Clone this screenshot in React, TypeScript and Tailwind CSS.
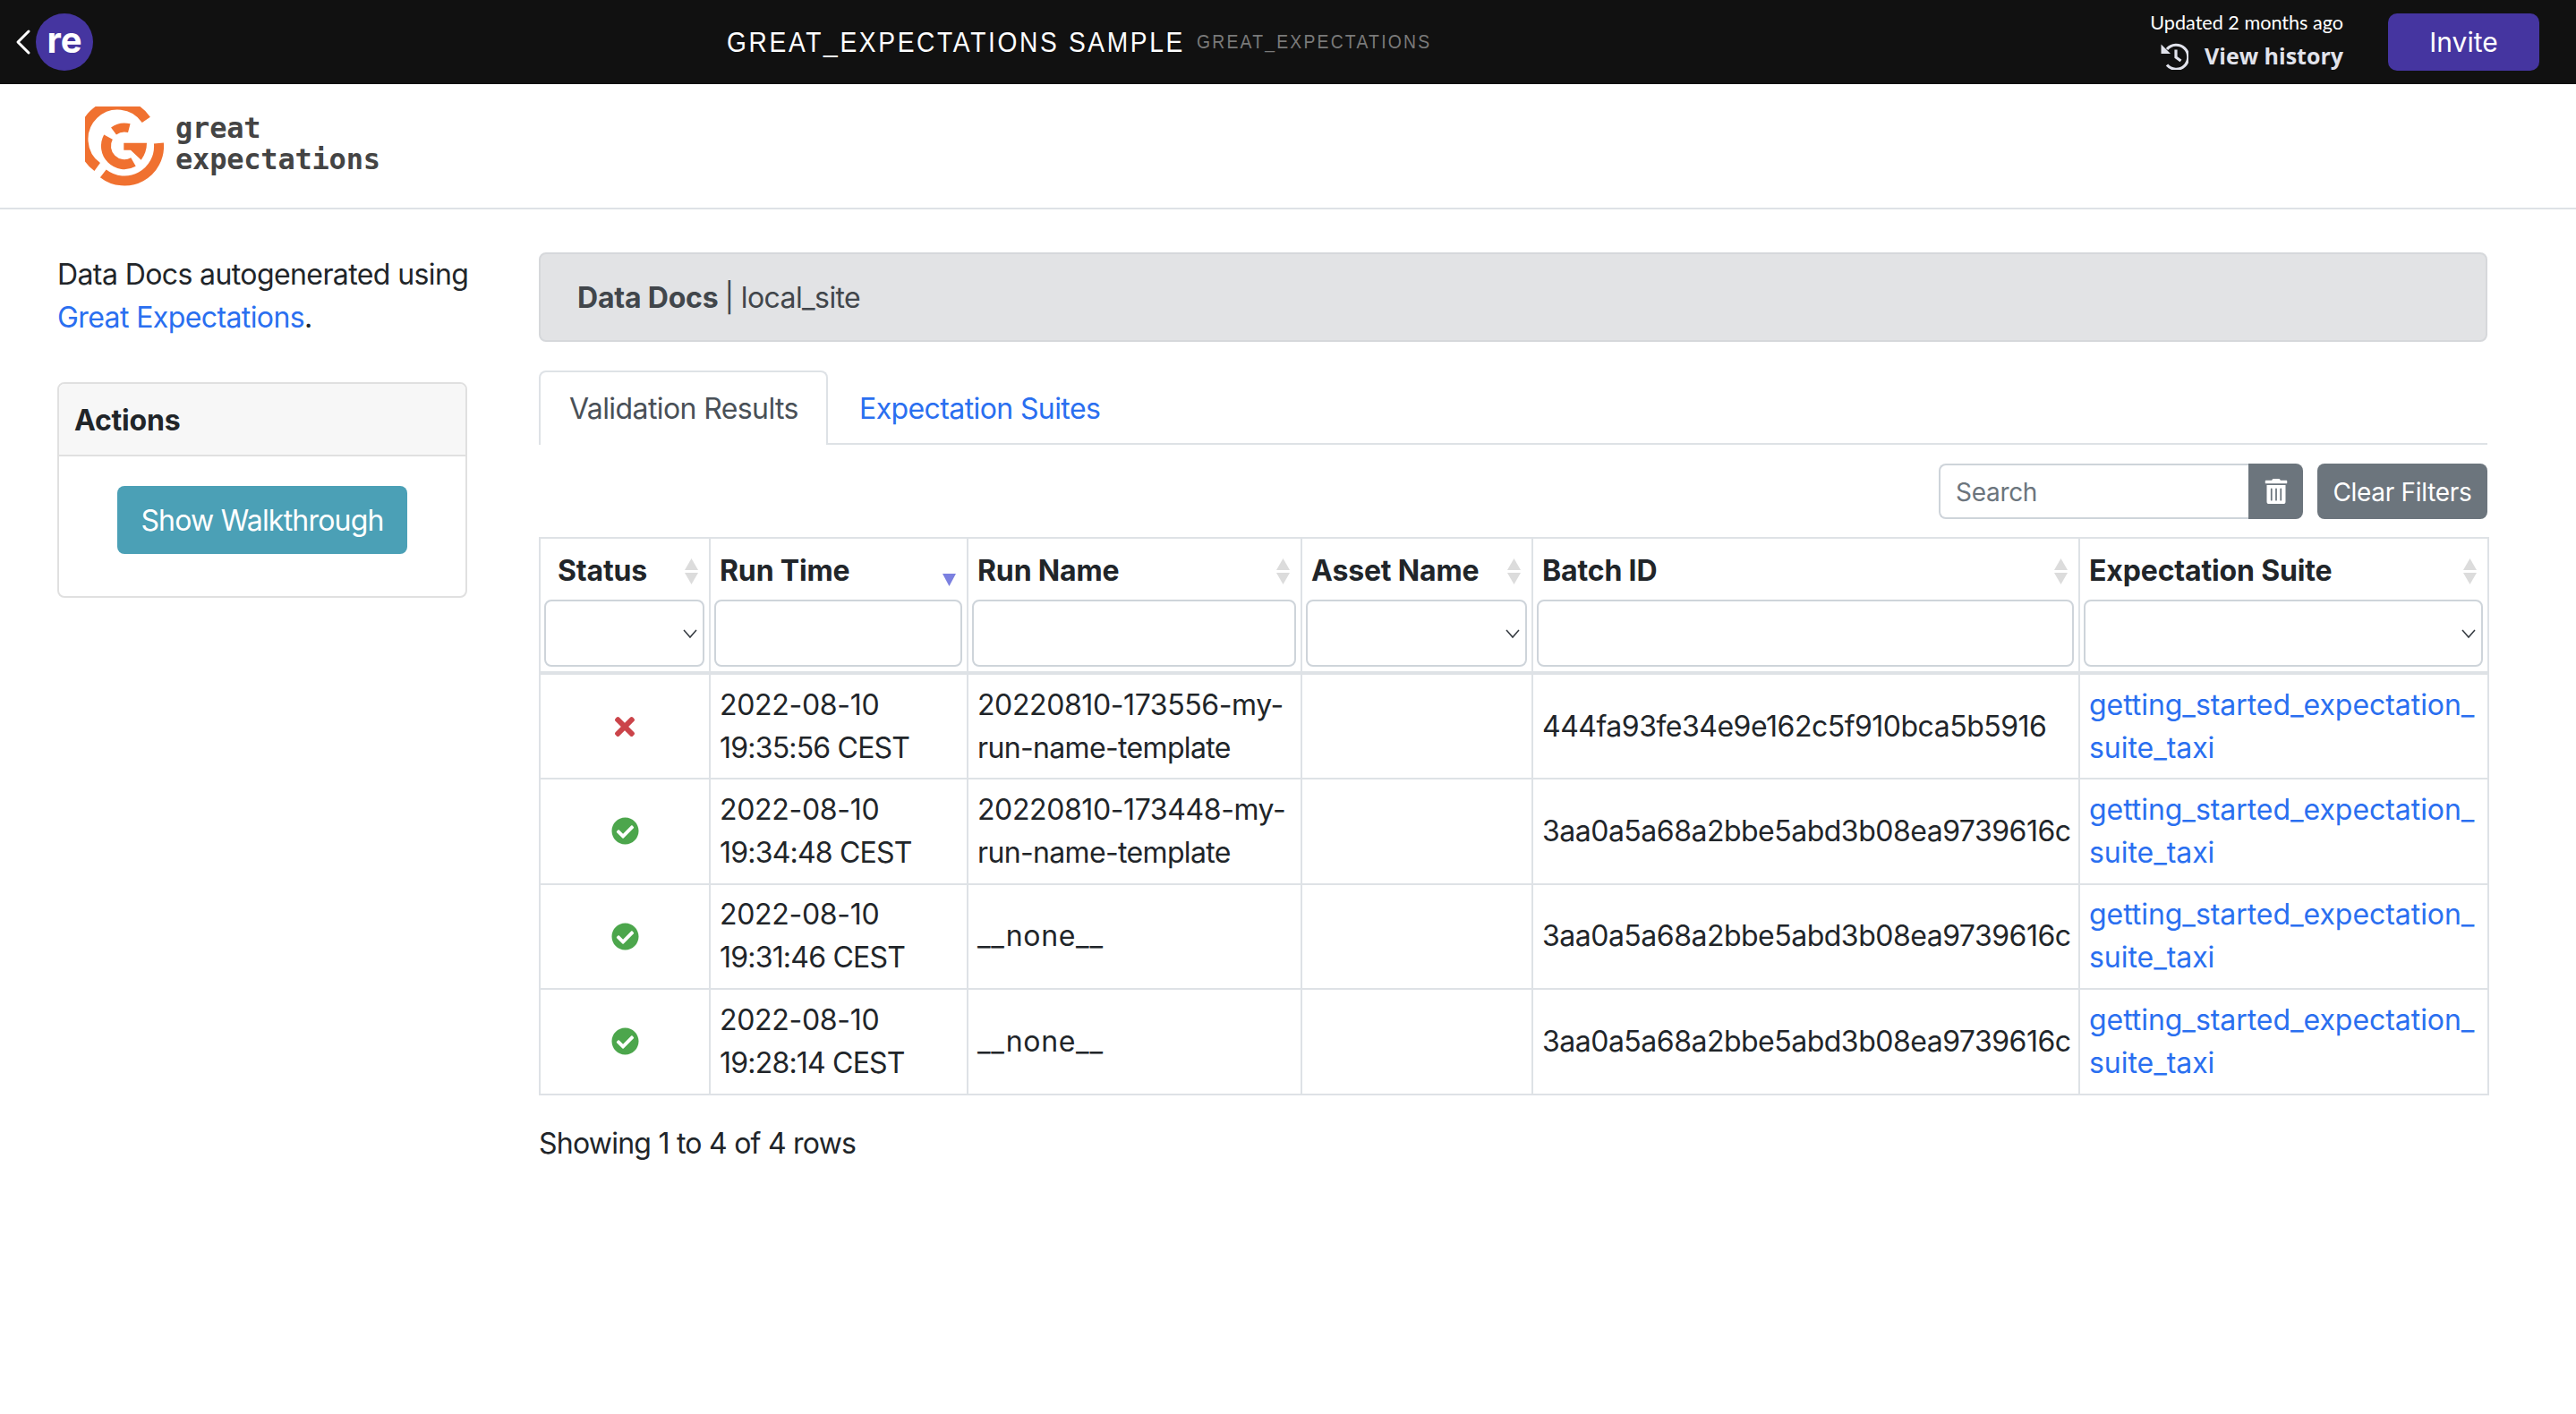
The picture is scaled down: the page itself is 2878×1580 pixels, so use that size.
import { ChevronLeft } from "lucide-react";
import { FaCheckCircle, FaTimes, FaTrashAlt } from "react-icons/fa";

const rows = [
  { ok: false, date: "2022-08-10", time: "19:35:56 CEST", name: ["20220810-173556-my-", "run-name-template"], batch: "444fa93fe34e9e162c5f910bca5b5916" },
  { ok: true, date: "2022-08-10", time: "19:34:48 CEST", name: ["20220810-173448-my-", "run-name-template"], batch: "3aa0a5a68a2bbe5abd3b08ea9739616c" },
  { ok: true, date: "2022-08-10", time: "19:31:46 CEST", name: [], batch: "3aa0a5a68a2bbe5abd3b08ea9739616c" },
  { ok: true, date: "2022-08-10", time: "19:28:14 CEST", name: [], batch: "3aa0a5a68a2bbe5abd3b08ea9739616c" },
];

function Logo() {
  return (
    <svg width="88" height="89" viewBox="0 0 88 89" fill="none" stroke="#f07130">
      <path d="M68.300 14.800 A38.500 38.500 0 1 0 13.700 67.500" strokeWidth="11" />
      <path d="M20.300 74.800 A38.500 38.500 0 0 0 82.400 41" strokeWidth="11" />
      <path d="M32 27.500 A20.500 20.500 0 0 1 49.300 24.200" strokeWidth="10" />
      <path d="M26 34.200 A20.500 20.500 0 0 0 54 62" strokeWidth="11" />
      <path d="M43.300 40.800 H69 Q69 51 62.700 59.800 L51 48.800 H43.300 Z" fill="#f07130" stroke="none" />
    </svg>
  );
}

function HistoryIcon() {
  return (
    <svg width="31" height="31" viewBox="0 0 31 31" fill="none" stroke="#e1e3ec" strokeWidth="3.200" className="mr-[18px]">
      <path d="M7 8 A13.500 13.500 0 1 1 7 25.500" />
      <path d="M0.500 2.500 V13 H11 Z" fill="#e1e3ec" stroke="none" />
      <path d="M17 8.500 V17 L22.500 21" />
    </svg>
  );
}

function SortIcon({ active }: { active?: boolean }) {
  if (active) {
    return (
      <svg width="15" height="29" viewBox="0 0 15 29" className="mt-[5px] shrink-0">
        <path d="M0 15h15l-7.500 14z" fill="#7b80e0" />
      </svg>
    );
  }
  return (
    <svg width="15" height="29" viewBox="0 0 15 29" className="shrink-0">
      <path d="M7.500 0L15 13H0z" fill="#dcdcdc" />
      <path d="M0 16h15L7.500 29z" fill="#dcdcdc" />
    </svg>
  );
}

function Head({ label, active, first }: { label: string; active?: boolean; first?: boolean }) {
  return (
    <div className={`flex items-center justify-between h-[68px] pt-[4px] pr-[12px] ${first ? "pl-[19px]" : "pl-[10px]"}`}>
      <span>{label}</span>
      <SortIcon active={active} />
    </div>
  );
}

function FilterSelect() {
  return (
    <div className="flex items-center justify-end h-[75px] ml-[4px] mr-[5px] border-2 border-[#ced4da] rounded-[8px] pr-[6px] bg-white">
      <svg width="16" height="12" viewBox="0 0 16 12" fill="none" stroke="#343a40" strokeWidth="1.500">
        <path d="M1 2l7 8 7-8" />
      </svg>
    </div>
  );
}

function FilterInput() {
  return <div className="h-[75px] ml-[4px] mr-[5px] border-2 border-[#ced4da] rounded-[8px] bg-white" />;
}

export default function App() {
  return (
    <div className="min-h-[1580px] bg-white text-[32px] leading-[48px] tracking-[-0.6px] text-[#212529] font-['Inter',sans-serif]">
      <header className="h-[94px] bg-[#111111] flex items-center justify-between pr-[41px] tracking-normal">
        <div className="flex items-center w-[812px]">
          <ChevronLeft size={48} color="#ffffff" strokeWidth={1.500} className="ml-[2px] -mr-[10px]" />
          <div className="w-[64px] h-[64px] rounded-full bg-[#4535a0] flex items-center justify-center text-white font-bold text-[40px] leading-none pb-[4px]">
            re
          </div>
        </div>
        <div className="flex items-center flex-1">
          <span className="inline-block w-[525px] whitespace-nowrap origin-left scale-x-[0.88] text-[32px] text-white font-['Liberation_Sans',sans-serif] tracking-[3px]">GREAT_EXPECTATIONS SAMPLE</span>
          <span className="inline-block whitespace-nowrap origin-left scale-x-[0.88] text-[22px] text-[#7a7a7a] font-['Liberation_Sans',sans-serif] tracking-[2.500px]">GREAT_EXPECTATIONS</span>
        </div>
        <div className="flex flex-col items-end mr-[50px] -mt-[4px]">
          <span className="mb-[4px] text-[21.600px] leading-[30px] text-white font-['Lato',sans-serif]">Updated 2 months ago</span>
          <span className="flex items-center text-[25px] leading-[36px] font-bold text-[#e1e3ec] font-['Open_Sans',sans-serif]">
            <HistoryIcon />
            View history
          </span>
        </div>
        <button className="w-[169px] h-[64px] rounded-[10px] bg-[#4535a0] text-white text-[30px] leading-none font-['Inter',sans-serif]">Invite</button>
      </header>

      <div className="h-[140px] border-b-2 border-[#dee2e6] flex items-center pl-[95px]">
        <Logo />
        <div className="ml-[13px] text-[32px] leading-[35px] font-bold text-[#444444] font-['DejaVu_Sans_Mono',monospace] -mt-[5px] tracking-[-0.2px]">
          <div>great</div>
          <div>expectations</div>
        </div>
      </div>

      <div className="flex pl-[64px] pt-[48px]">
        <aside className="w-[458px] shrink-0 pt-[1px]">
          <p className="whitespace-nowrap">Data Docs autogenerated using</p>
          <p><a className="text-[#2a6ff0]">Great Expectations</a>.</p>
          <div className="mt-[48px] border-2 border-[#e0e0e0] rounded-[8px] h-[241px]">
            <div className="h-[81px] bg-[#f7f7f7] border-b-2 border-[#e0e0e0] rounded-t-[6px] flex items-center pl-[17px] pt-[3px] font-bold tracking-[-0.2px]">Actions</div>
            <div className="flex justify-center pt-[33px]">
              <button className="w-[324px] h-[76px] rounded-[8px] bg-[#4ba0b6] text-white pt-[2px] tracking-[-0.8px]">Show Walkthrough</button>
            </div>
          </div>
        </aside>

        <main className="ml-[80px] w-[2177px]">
          <div className="h-[100px] bg-[#e2e3e5] border-2 border-[#d6d8db] rounded-[8px] flex items-center pl-[41px] pt-[2px] text-[#41464b]">
            <b className="tracking-[-0.2px]">Data Docs</b>
            <span className="ml-[7px]">| local_site</span>
          </div>

          <div className="mt-[32px] flex h-[83px] border-b-2 border-[#dee2e6]">
            <div className="w-[323px] h-[83px] bg-white border-2 border-b-0 border-[#dee2e6] rounded-t-[8px] flex items-center pl-[32px] pt-[1px] text-[#495057]">Validation Results</div>
            <a className="flex items-center pl-[35px] pt-[5px] text-[#2a6ff0]">Expectation Suites</a>
          </div>

          <div className="mt-[21px] flex justify-end text-[28px] leading-[42px] tracking-[-0.3px]">
            <div className="w-[346px] h-[62px] border-2 border-r-0 border-[#ced4da] rounded-l-[8px] flex items-center pl-[17px] pt-[2px] text-[#6c757d]">Search</div>
            <button className="w-[61px] h-[62px] bg-[#6c757d] rounded-r-[8px] flex items-center justify-center text-white">
              <FaTrashAlt size={28} />
            </button>
            <button className="ml-[16px] w-[190px] h-[62px] bg-[#6c757d] rounded-[8px] text-white pt-[2px]">Clear Filters</button>
          </div>

          <table className="mt-[20px] w-[2177px] table-fixed border-collapse">
            <colgroup>
              <col className="w-[190px]" />
              <col className="w-[288px]" />
              <col className="w-[373px]" />
              <col className="w-[258px]" />
              <col className="w-[611px]" />
              <col className="w-[457px]" />
            </colgroup>
            <thead>
              <tr className="font-bold text-left tracking-[-0.15px]">
                <th className="border-2 border-b-4 border-[#dee2e6] p-0 pb-[5px] align-top">
                  <Head label="Status" first />
                  <FilterSelect />
                </th>
                <th className="border-2 border-b-4 border-[#dee2e6] p-0 pb-[5px] align-top">
                  <Head label="Run Time" active />
                  <FilterInput />
                </th>
                <th className="border-2 border-b-4 border-[#dee2e6] p-0 pb-[5px] align-top">
                  <Head label="Run Name" />
                  <FilterInput />
                </th>
                <th className="border-2 border-b-4 border-[#dee2e6] p-0 pb-[5px] align-top">
                  <Head label="Asset Name" />
                  <FilterSelect />
                </th>
                <th className="border-2 border-b-4 border-[#dee2e6] p-0 pb-[5px] align-top">
                  <Head label="Batch ID" />
                  <FilterInput />
                </th>
                <th className="border-2 border-b-4 border-[#dee2e6] p-0 pb-[5px] align-top">
                  <Head label="Expectation Suite" />
                  <FilterSelect />
                </th>
              </tr>
            </thead>
            <tbody>
              {rows.map((row) => (
                <tr key={row.time} className="h-[117.500px]">
                  <td className="border-2 border-[#dee2e6] py-[9.600px]">
                    <div className="flex justify-center">
                      {row.ok ? <FaCheckCircle size={31} color="#4ca64c" /> : <FaTimes size={32} color="#cb444a" />}
                    </div>
                  </td>
                  <td className="border-2 border-[#dee2e6] py-[9.600px] pl-[10px]">
                    <div className="tracking-[-0.3px]">{row.date}</div>
                    <div className="tracking-[-0.8px]">{row.time}</div>
                  </td>
                  <td className="border-2 border-[#dee2e6] py-[9.600px] pl-[10px]">
                    {row.name.length > 0 ? (
                      <>
                        <div className="tracking-[-0.4px]">{row.name[0]}</div>
                        <div className="tracking-[-0.65px]">{row.name[1]}</div>
                      </>
                    ) : (
                      <div className="tracking-[0.7px]">__none__</div>
                    )}
                  </td>
                  <td className="border-2 border-[#dee2e6]" />
                  <td className="border-2 border-[#dee2e6] py-[9.600px] pl-[10px] whitespace-nowrap tracking-[-0.5px]">{row.batch}</td>
                  <td className="border-2 border-[#dee2e6] py-[9.600px] pl-[10px] text-[#2a6ff0] tracking-[-0.05px]">
                    <div>getting_started_expectation_</div>
                    <div>suite_taxi</div>
                  </td>
                </tr>
              ))}
            </tbody>
          </table>

          <p className="mt-[30px] tracking-[-0.76px]">Showing 1 to 4 of 4 rows</p>
        </main>
      </div>
    </div>
  );
}
